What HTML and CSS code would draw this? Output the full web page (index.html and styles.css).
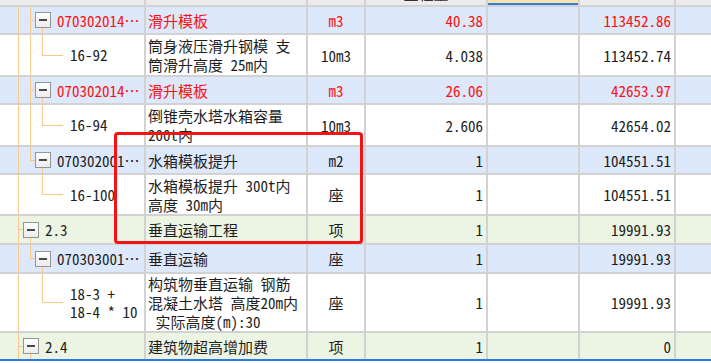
FILE: index.html
```html
<!DOCTYPE html>
<html lang="zh">
<head>
<meta charset="utf-8">
<title>工程量清单</title>
<link rel="stylesheet" href="styles.css">
</head>
<body>
<div class="sheet">
  <div class="row hdr">
    <div class="c"></div>
    <div class="c"></div>
    <div class="c"></div>
    <div class="c htext"><span>工程量</span></div>
    <div class="c sel"></div>
    <div class="c"></div>
    <div class="c"></div>
  </div>

  <div class="row blue red h26">
    <div class="c tree"><span class="seg"></span><span class="seg vl"></span><span class="seg tee"></span><span class="node"><span class="box"></span></span><span class="code">070302014…</span></div>
    <div class="c name">滑升模板</div>
    <div class="c unit">m3</div>
    <div class="c num">40.38</div>
    <div class="c"></div>
    <div class="c num">113452.86</div>
    <div class="c"></div>
  </div>

  <div class="row h40">
    <div class="c tree"><span class="seg"></span><span class="seg vl"></span><span class="seg vl"></span><span class="leaf"></span><span class="lcode">16-92</span></div>
    <div class="c name">筒身液压滑升钢模 支<br>筒滑升高度 25m内</div>
    <div class="c unit">10m3</div>
    <div class="c num">4.038</div>
    <div class="c"></div>
    <div class="c num">113452.74</div>
    <div class="c"></div>
  </div>

  <div class="row blue red h26">
    <div class="c tree"><span class="seg"></span><span class="seg vl"></span><span class="seg tee"></span><span class="node"><span class="box"></span></span><span class="code">070302014…</span></div>
    <div class="c name">滑升模板</div>
    <div class="c unit">m3</div>
    <div class="c num">26.06</div>
    <div class="c"></div>
    <div class="c num">42653.97</div>
    <div class="c"></div>
  </div>

  <div class="row h40">
    <div class="c tree"><span class="seg"></span><span class="seg vl"></span><span class="seg vl"></span><span class="leaf"></span><span class="lcode">16-94</span></div>
    <div class="c name">倒锥壳水塔水箱容量<br>200t内</div>
    <div class="c unit">10m3</div>
    <div class="c num">2.606</div>
    <div class="c"></div>
    <div class="c num">42654.02</div>
    <div class="c"></div>
  </div>

  <div class="row blue h26">
    <div class="c tree"><span class="seg"></span><span class="seg vl"></span><span class="seg elb"></span><span class="node"><span class="box"></span></span><span class="code">070302001…</span></div>
    <div class="c name">水箱模板提升</div>
    <div class="c unit">m2</div>
    <div class="c num">1</div>
    <div class="c"></div>
    <div class="c num">104551.51</div>
    <div class="c"></div>
  </div>

  <div class="row h39">
    <div class="c tree"><span class="seg"></span><span class="seg vl"></span><span class="seg"></span><span class="leaf"></span><span class="lcode">16-100</span></div>
    <div class="c name">水箱模板提升 300t内<br>高度 30m内</div>
    <div class="c unit">座</div>
    <div class="c num">1</div>
    <div class="c"></div>
    <div class="c num">104551.51</div>
    <div class="c"></div>
  </div>

  <div class="row green h27">
    <div class="c tree"><span class="seg"></span><span class="seg tee"></span><span class="node"><span class="box"></span></span><span class="code">2.3</span></div>
    <div class="c name">垂直运输工程</div>
    <div class="c unit">项</div>
    <div class="c num">1</div>
    <div class="c"></div>
    <div class="c num">19991.93</div>
    <div class="c"></div>
  </div>

  <div class="row blue h27">
    <div class="c tree"><span class="seg"></span><span class="seg vl"></span><span class="seg elb"></span><span class="node"><span class="box"></span></span><span class="code">070303001…</span></div>
    <div class="c name">垂直运输</div>
    <div class="c unit">座</div>
    <div class="c num">1</div>
    <div class="c"></div>
    <div class="c num">19991.93</div>
    <div class="c"></div>
  </div>

  <div class="row h57">
    <div class="c tree"><span class="seg"></span><span class="seg vl"></span><span class="seg"></span><span class="leaf"></span><span class="lcode">18-3 +<br>18-4 * 10</span></div>
    <div class="c name">构筑物垂直运输 钢筋<br>混凝土水塔 高度20m内<br>&nbsp;实际高度(m):30</div>
    <div class="c unit">座</div>
    <div class="c num">1</div>
    <div class="c"></div>
    <div class="c num">19991.93</div>
    <div class="c"></div>
  </div>

  <div class="row green h26 lastrow">
    <div class="c tree"><span class="seg"></span><span class="seg tee"></span><span class="node"><span class="box"></span></span><span class="code">2.4</span></div>
    <div class="c name">建筑物超高增加费</div>
    <div class="c unit">项</div>
    <div class="c num">1</div>
    <div class="c"></div>
    <div class="c num">0</div>
    <div class="c"></div>
  </div>

  <div class="mark"></div>
</div>
</body>
</html>
```

FILE: styles.css
```css
html, body {
  margin: 0;
  padding: 0;
  background: #ffffff;
  overflow: hidden;
}

.sheet {
  position: relative;
  width: 711px;
  height: 363px;
  font-family: "Noto Sans Mono CJK SC", "Noto Sans CJK SC", "DejaVu Sans Mono", monospace;
  font-size: 15px;
  color: #1e1e1e;
}

.row {
  display: grid;
  grid-template-columns: 146px 162px 58px 122px 92px 96px 1fr;
  border-bottom: 2px solid #d2d2d2;
  background: #ffffff;
}

.c {
  display: flex;
  align-items: center;
  border-right: 2px solid #d2d2d2;
  overflow: hidden;
  min-width: 0;
}

.c:last-child {
  border-right: none;
}

.hdr {
  height: 5px;
  background: #ececec;
}

.hdr .sel {
  background: linear-gradient(#fbe1ab 0 3px, #2f7de2 3px 5px);
}

.htext {
  align-items: flex-end;
  justify-content: center;
}

.htext span {
  line-height: 15px;
  flex: none;
  margin-bottom: 4px;
  color: #333;
}

.h26 { height: 26px; }
.h27 { height: 27px; }
.h39 { height: 39px; }
.h40 { height: 40px; }
.h57 { height: 57px; }

.blue { background: #dde8fb; }
.green { background: #ecf5e4; }
.red { color: #fb1010; }

.lastrow { border-bottom-color: #2a7ce4; }

/* tree column */
.tree {
  align-items: stretch;
}

.seg {
  flex: none;
  width: 12px;
}

.vl {
  background: linear-gradient(#fbc88c, #fbc88c) no-repeat 6px 0 / 1px 100%;
}

.tee {
  background:
    linear-gradient(#fbc88c, #fbc88c) no-repeat 6px 0 / 1px 100%,
    linear-gradient(#fbc88c, #fbc88c) no-repeat 6px 50% / 6px 1px;
}

.elb {
  background:
    linear-gradient(#fbc88c, #fbc88c) no-repeat 6px 0 / 1px 50%,
    linear-gradient(#fbc88c, #fbc88c) no-repeat 6px 50% / 6px 1px;
}

.leaf {
  flex: none;
  width: 27px;
  background:
    linear-gradient(#fbc88c, #fbc88c) no-repeat 6px 0 / 1px 50%,
    linear-gradient(#fbc88c, #fbc88c) no-repeat 6px 50% / 21px 1px;
}

.node {
  flex: none;
  width: 16px;
  margin-left: -1px;
  display: flex;
  align-items: center;
  background: linear-gradient(#fbc88c, #fbc88c) no-repeat 7px 100% / 1px 50%;
}

.box {
  box-sizing: border-box;
  width: 16px;
  height: 16px;
  border: 1px solid #959595;
  background: linear-gradient(#ffffff, #ececec);
  display: flex;
  align-items: center;
  justify-content: center;
}

.box::after {
  content: "";
  width: 8px;
  height: 2px;
  background: #4a4a4a;
}

.code {
  align-self: center;
  margin-left: 6px;
  white-space: nowrap;
}

.lcode {
  align-self: center;
  margin-left: 7px;
  line-height: 18px;
  white-space: nowrap;
}

.name {
  padding-left: 2px;
  line-height: 19px;
  white-space: nowrap;
}

.unit {
  justify-content: center;
}

.num {
  justify-content: flex-end;
  padding-right: 3px;
}

.mark {
  position: absolute;
  left: 114px;
  top: 132px;
  width: 249px;
  height: 112px;
  box-sizing: border-box;
  border: 3px solid #f21414;
  border-radius: 4px;
}
```
